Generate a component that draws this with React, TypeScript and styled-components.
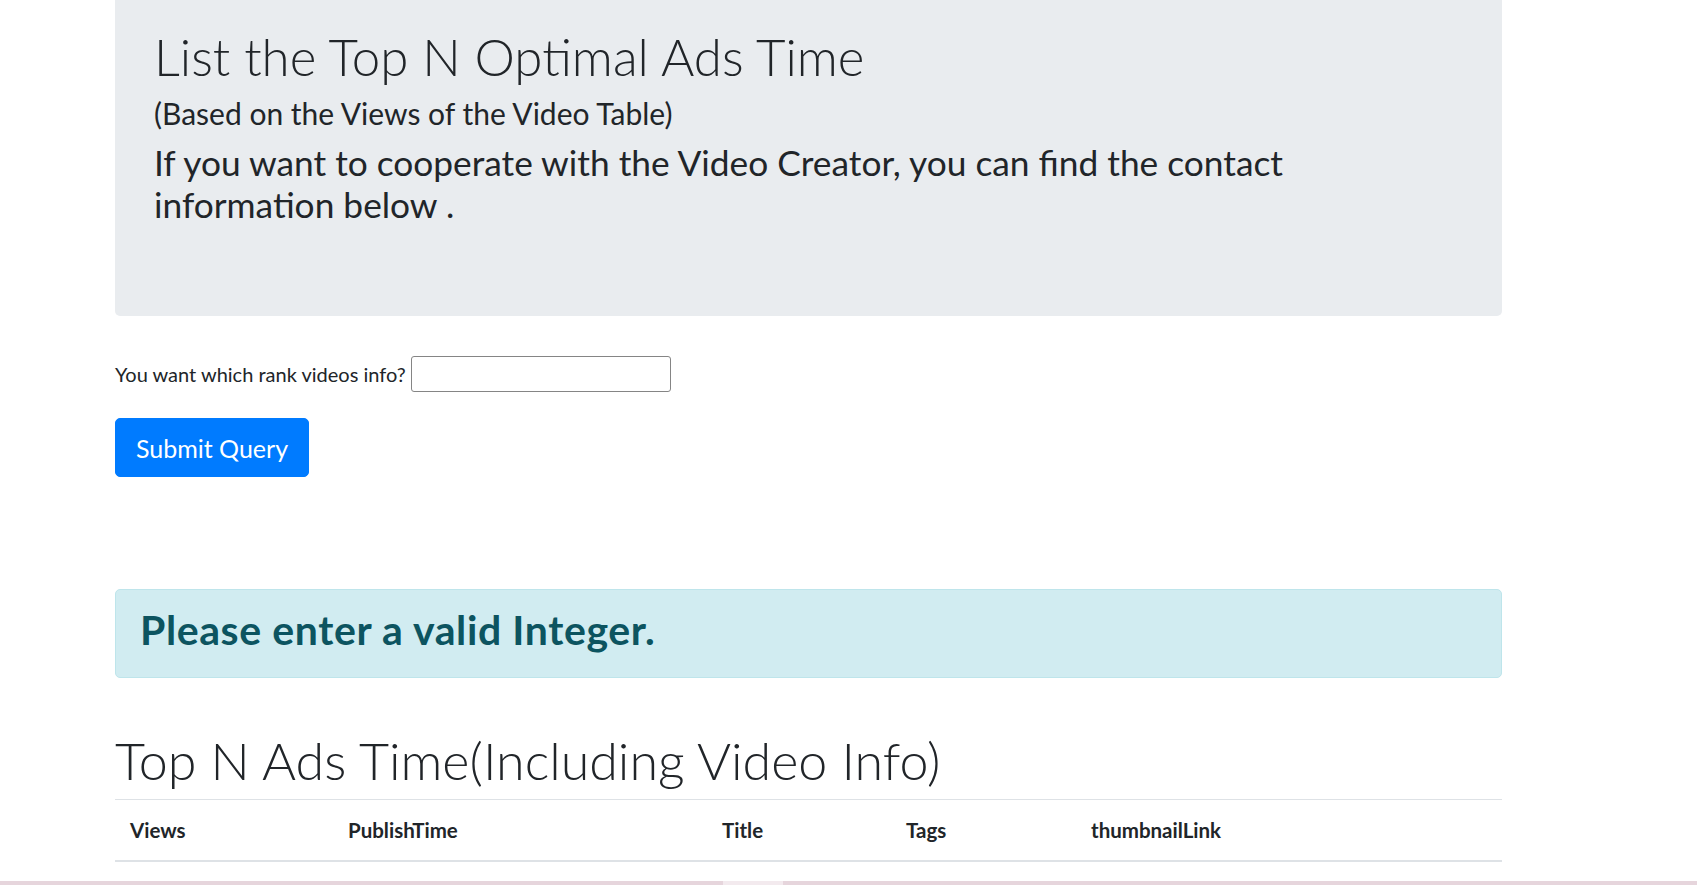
import React from 'react'
import styled, { createGlobalStyle } from 'styled-components'

const GlobalStyle = createGlobalStyle`
  body {
    margin: 0;
    background: #fff;
    color: #212529;
    font-family: 'Lato', 'Noto Sans', sans-serif;
  }
`

const Page = styled.div`
  width: 1697px;
  overflow: hidden;
`

const Container = styled.main`
  width: 1387px;
  margin-left: 115px;
`

const Jumbotron = styled.section`
  background: #e9ecef;
  border-radius: 0 0 5px 5px;
  padding: 26px 39px 89px;
`

const Display = styled.h1`
  margin: 0;
  font-size: 51px;
  font-weight: 300;
  line-height: 61px;
`

const Sub = styled.p`
  margin: 8px 0 0;
  font-size: 30px;
  font-weight: 400;
  line-height: 36px;
`

const Lead = styled.p`
  margin: 11px 0 0;
  max-width: 1220px;
  font-size: 35.3px;
  font-weight: 400;
  line-height: 42.3px;
`

const QueryForm = styled.form`
  margin-top: 40px;
  display: flex;
  flex-direction: column;
  align-items: flex-start;
  gap: 26px;
`

const Field = styled.div`
  display: flex;
  align-items: center;
  gap: 5px;
  height: 36px;
`

const Label = styled.label`
  font-size: 20px;
  line-height: 36px;
`

const Input = styled.input`
  box-sizing: border-box;
  width: 260px;
  height: 36px;
  border: 1px solid #858585;
  border-radius: 3px;
  background: #fff;
  padding: 0 6px;
  font: inherit;
`

const SubmitButton = styled.button`
  box-sizing: border-box;
  width: 194px;
  height: 59px;
  padding: 2px 0 0;
  border: 1px solid #007bff;
  border-radius: 5px;
  background: #007bff;
  color: #fff;
  font-family: 'Lato', sans-serif;
  font-size: 25px;
  line-height: 55px;
  cursor: pointer;
`

const Alert = styled.div`
  margin-top: 112px;
  box-sizing: border-box;
  height: 89px;
  padding: 15px 24px 0;
  background: #d1ecf1;
  border: 1px solid #bee5eb;
  border-radius: 5px;
  color: #0c5460;
`

const AlertText = styled.h1`
  margin: 0;
  font-size: 41px;
  font-weight: 700;
  letter-spacing: 0.6px;
  line-height: 49px;
`

const SectionTitle = styled.h2`
  margin: 52px 0 8px;
  font-size: 52px;
  font-weight: 300;
  line-height: 61px;
`

const Table = styled.table`
  width: 100%;
  table-layout: fixed;
  border-collapse: collapse;
`

const HeadCell = styled.th<{ $w: number }>`
  box-sizing: border-box;
  width: ${(p) => p.$w}px;
  padding: 18px 15px;
  border-top: 1px solid #dee2e6;
  border-bottom: 2px solid #dee2e6;
  text-align: left;
  font-size: 20.5px;
  font-weight: 700;
  line-height: 24px;
`

const Strip = styled.div`
  margin-top: 19px;
  height: 10px;
  display: flex;
`

const StripPart = styled.div<{ $w?: number; $light?: boolean }>`
  flex: ${(p) => (p.$w ? `0 0 ${p.$w}px` : '1')};
  background: ${(p) => (p.$light ? '#f3eaee' : '#e6d5dc')};
`

const columns = [
  { name: 'Views', w: 218 },
  { name: 'PublishTime', w: 374 },
  { name: 'Title', w: 184 },
  { name: 'Tags', w: 185 },
  { name: 'thumbnailLink', w: 426 },
]

const App = () => {
  return (
    <Page>
      <GlobalStyle />
      <Container>
        <Jumbotron>
          <Display>List the Top N Optimal Ads Time</Display>
          <Sub>(Based on the Views of the Video Table)</Sub>
          <Lead>If you want to cooperate with the Video Creator, you can find the contact information below .</Lead>
        </Jumbotron>

        <QueryForm onSubmit={(e) => e.preventDefault()}>
          <Field>
            <Label htmlFor="rank">You want which rank videos info?</Label>
            <Input id="rank" type="text" />
          </Field>
          <SubmitButton type="submit">Submit Query</SubmitButton>
        </QueryForm>

        <Alert>
          <AlertText>Please enter a valid Integer.</AlertText>
        </Alert>

        <SectionTitle>Top N Ads Time(Including Video Info)</SectionTitle>
        <Table>
          <thead>
            <tr>
              {columns.map((c) => (
                <HeadCell key={c.name} $w={c.w}>
                  {c.name}
                </HeadCell>
              ))}
            </tr>
          </thead>
        </Table>
      </Container>
      <Strip>
        <StripPart $w={723} />
        <StripPart $w={60} $light />
        <StripPart />
      </Strip>
    </Page>
  )
}

export default App
